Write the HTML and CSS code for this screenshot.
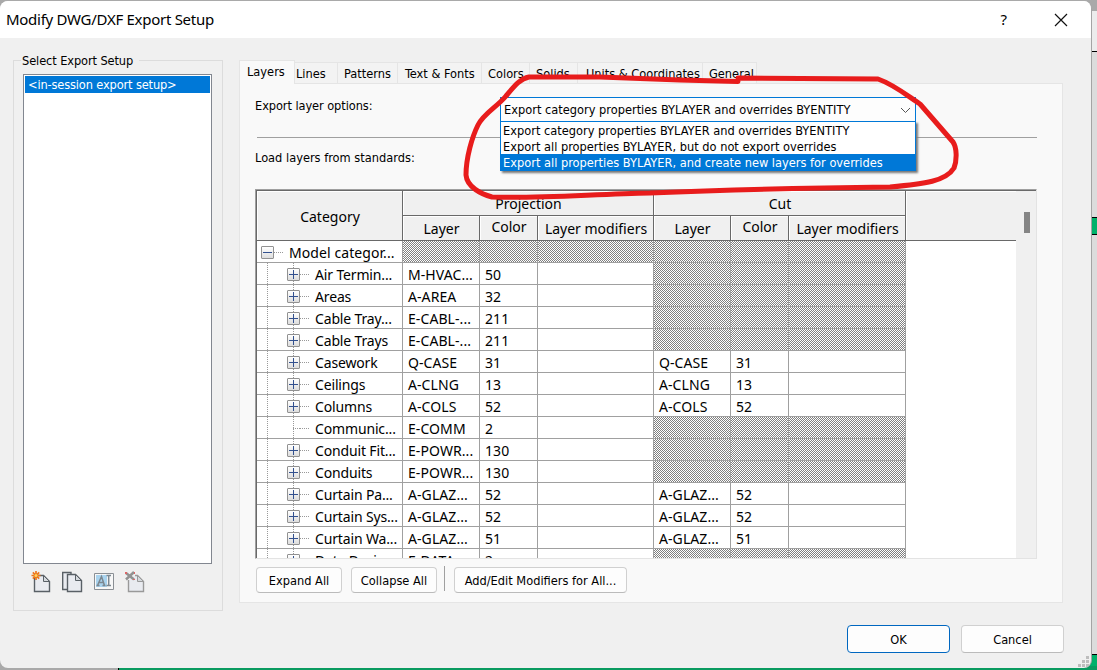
FILE: index.html
```
<!DOCTYPE html>
<html lang="en">
<head>
<meta charset="utf-8">
<title>Modify DWG/DXF Export Setup</title>
<link rel="stylesheet" href="styles.css">
</head>
<body>
<div class="backdrop">
  <span class="edge-top"></span><span class="edge-green"></span><span class="edge-corner"></span><span class="edge-bottom"></span>
</div>
<main class="dialog">
  <header class="titlebar">
    <h1>Modify DWG/DXF Export Setup</h1>
    <span class="help">?</span>
    <svg class="close" width="14" height="14" viewBox="0 0 14 14"><path d="M1 1L13 13M13 1L1 13"/></svg>
  </header>
  <div class="content">
    <section class="group">
      <h2>Select Export Setup</h2>
      <div class="list"><div class="item">&lt;in-session export setup&gt;</div></div>
      <div class="tools">
        <svg width="20" height="22" viewBox="0 0 20 22"><path class="page" d="M3.500 4.500H12.500L18.500 10.500V20.500H3.500Z"/><path class="fold" d="M12.500 4.500V10.500H18.500Z"/><path class="burst" d="M5 0V9M.5 4.500H9.500M1.800 1.300L8.200 7.700M8.200 1.300L1.800 7.700"/><circle cx="5" cy="4.500" r="1.500" fill="#ffd35a"/></svg>
        <svg width="21" height="22" viewBox="0 0 21 22"><path class="page" d="M.7 1.500H9V18.500H.7Z"/><path class="page" d="M5.500 3.500H13.500L19.500 9.500V20.500H5.500Z"/><path class="fold" d="M13.500 3.500V9.500H19.500Z"/></svg>
        <svg width="20" height="22" viewBox="0 0 20 22"><path fill="#f7f7f7" stroke="#8a8f94" d="M.5 2.500H19.500V18.500H.5Z"/><path fill="#a9d3ee" d="M2 4H13V16H2Z"/><path fill="none" stroke="#7b8790" stroke-width="1.500" d="M3.500 14.500L7.500 5.500L10.500 14.500M5 11.500H9.500M2.500 14.500H5.500M8.500 14.500H11.500M12.500 4.500H17M12.500 14.500H17M14.700 4.500V14.500"/></svg>
        <svg width="20" height="22" viewBox="0 0 20 22"><path class="page off" d="M3.500 9V20.500H18.500V10.500L12.500 4.500H10"/><path class="fold off" d="M12.500 4.500V10.500H18.500Z"/><path fill="none" stroke="#929292" stroke-width="2.500" d="M1 2L9 8.500M9 1L1 8.500"/><path fill="#d66" d="M0 1h2v2H0zM9 1h1v2H9zM8 8h2v1H8z"/></svg>
      </div>
    </section>
    <section class="right">
      <nav class="tabs">
        <span class="tab on t1">Layers</span><span class="tab t2">Lines</span><span class="tab t3">Patterns</span><span class="tab t4">Text &amp; Fonts</span><span class="tab t5">Colors</span><span class="tab t6">Solids</span><span class="tab t7">Units &amp; Coordinates</span><span class="tab t8">General</span>
      </nav>
      <div class="panel">
        <div class="option">
          <label>Export layer options:</label>
          <div class="combo"><span>Export category properties BYLAYER and overrides BYENTITY</span>
            <svg width="11" height="7" viewBox="0 0 11 7"><path d="M1 1L5.500 5.500L10 1"/></svg>
            <ul class="menu"><li>Export category properties BYLAYER and overrides BYENTITY</li><li>Export all properties BYLAYER, but do not export overrides</li><li class="sel">Export all properties BYLAYER, and create new layers for overrides</li></ul>
          </div>
        </div>
        <hr>
        <div class="standards">Load layers from standards:</div>
        <div class="grid">
          <div class="table" id="table">
            <div class="head cat">Category</div>
            <div class="head wide">Projection</div>
            <div class="head wide">Cut</div>
            <div class="head">Layer</div><div class="head up">Color</div><div class="head">Layer modifiers</div>
            <div class="head">Layer</div><div class="head up">Color</div><div class="head">Layer modifiers</div>
          </div>
          <div class="filler"></div>
          <div class="scroll"><span></span></div>
        </div>
        <div class="actions"><button class="b1">Expand All</button><button class="b2">Collapse All</button><i></i><button class="b3">Add/Edit Modifiers for All...</button></div>
      </div>
    </section>
  </div>
  <footer><button class="ok">OK</button><button>Cancel</button></footer>
  <svg class="grip" width="11" height="11" viewBox="0 0 11 11"><path d="M8 0h3v3H8zM4 4h3v3H4zM8 4h3v3H8zM0 8h3v3H0zM4 8h3v3H4zM8 8h3v3H8z"/></svg>
</main>
<svg class="ink" width="1097" height="670" viewBox="0 0 1097 670"><path d="M738 81.500L680 80L600 77L529 77C519 79 513 88 506 96C497 107 484 113 478 125C472 137 466 158 466 175C467 187 481 194 492 197C535 199 595 194 650 193C720 190 800 188 890 187C925 184 946 181 954 168C957 160 957 148 953 142L920 104C909 97 895 85 878 79L738 78"/></svg>
<script src="table.js"></script>
</body>
</html>
```
FILE: table.js
```
const rows = [
  ["Model categor...", null, null, true, "-"],
  ["Air Termin...", "M-HVAC...", "50", true],
  ["Areas", "A-AREA", "32", true],
  ["Cable Tray...", "E-CABL-...", "211", true],
  ["Cable Trays", "E-CABL-...", "211", true],
  ["Casework", "Q-CASE", "31", false],
  ["Ceilings", "A-CLNG", "13", false],
  ["Columns", "A-COLS", "52", false],
  ["Communic...", "E-COMM", "2", true, ""],
  ["Conduit Fit...", "E-POWR...", "130", true],
  ["Conduits", "E-POWR...", "130", true],
  ["Curtain Pa...", "A-GLAZ...", "52", false],
  ["Curtain Sys...", "A-GLAZ...", "52", false],
  ["Curtain Wa...", "A-GLAZ...", "51", false],
  ["Data Devic...", "E-DATA...", "2", true]
];
const cell = (text, cls) => `<div class="cell ${cls || ""}"><span>${text || ""}</span></div>`;
document.getElementById("table").insertAdjacentHTML("beforeend", rows.map(([name, layer, color, off, mark = "+"]) => {
  const box = mark ? `<b class="box ${mark === "+" ? "plus" : ""}"></b>` : `<b class="nobox"></b>`;
  const first = `<div class="cell tree ${mark === "-" ? "root" : "leaf"}">${box}<i></i><span>${name}</span></div>`;
  const proj = layer ? cell(layer) + cell(color) + cell() : cell("", "off").repeat(3);
  const cut = off ? cell("", "off").repeat(3) : cell(layer) + cell(color) + cell();
  return first + proj + cut;
}).join(""));
```
FILE: styles.css
```
* { box-sizing: border-box; }
body { margin: 0; width: 1097px; height: 670px; overflow: hidden; position: relative; background: #a9a9a9; font: 12.7px/16px "DejaVu Sans Condensed", "DejaVu Sans", sans-serif; color: #000; }
h1, h2, ul { margin: 0; padding: 0; font: inherit; list-style: none; }
.backdrop span { position: absolute; }
.edge-top { left: 1091px; top: 11px; width: 6px; height: 659px; background: linear-gradient(#ececec 0 40px, #000 40px 41px, #dcdcdc 41px); }
.edge-green { left: 1091px; top: 217px; width: 6px; height: 18px; background: #00b16a; border: solid #000; border-width: 1px 0; }
.edge-corner { left: 1080px; top: 654px; width: 17px; height: 16px; background: #00b16a; border-top: 1px solid #000; }
.edge-bottom { left: 118px; top: 666px; width: 979px; height: 4px; background: #0a9b60; border-left: 1px solid #000; }
.dialog { position: absolute; left: 0; top: 1px; width: 1092px; height: 667px; background: #f0f0f0; border-radius: 8px; border-right: 1px solid #a4a4a4; overflow: hidden; display: flex; flex-direction: column; }
.titlebar { height: 37px; background: #fff; display: flex; align-items: center; padding: 0 23px 0 6px; font: 15px/20px "Noto Sans", sans-serif; flex: none; }
h1 { flex: 1; margin-top: -2px; letter-spacing: -.28px; white-space: nowrap; }
.help { margin-right: 47px; margin-top: -2px; }
.close { fill: none; stroke: #111; stroke-width: 1.2; }
.content { display: flex; padding-left: 13px; height: 565px; flex: none; }
.group { width: 210px; height: 551px; margin-top: 22px; border: 1px solid #dcdcdc; padding: 0 9px; }
h2 { width: 118px; margin: -8px 0 5px -2px; padding-left: 1px; background: #f0f0f0; white-space: nowrap; letter-spacing: -.1px; }
.list { width: 189px; height: 490px; background: #fff; border: 1px solid #828790; padding: 1px; }
.item { height: 17px; background: #0078d7; color: #fff; padding-left: 3px; line-height: 17px; white-space: nowrap; letter-spacing: -.14px; }
.tools { display: flex; gap: 11px; padding: 7px 0 0 8px; }
.page { fill: #e9ebf0; stroke: #596066; stroke-width: 1.4; }
.fold { fill: #d5d9dd; stroke: #596066; }
.off { stroke: #999; }
.cell.off { background: repeating-conic-gradient(#808080 0 25%, #fff 0 50%) 0 0 / 2px 2px; }
.burst { fill: none; stroke: #ed771d; stroke-width: 1.7; }
.right { width: 824px; margin-left: 16px; padding-top: 22px; }
.tabs { display: flex; align-items: flex-end; height: 23px; }
.tab { height: 21px; border: 1px solid #e5e5e5; border-width: 1px 1px 0 0; background: #f3f3f3; padding-top: 3px; white-space: nowrap; }
.tab.on { height: 24px; margin-bottom: -1px; background: #f9f9f9; border-left-width: 1px; position: relative; z-index: 1; }
.t1 { width: 56px; padding-left: 7px; } .t2 { width: 43px; padding-left: 1px; } .t3 { width: 60px; padding-left: 6px; } .t4 { width: 84px; padding-left: 7px; } .t5 { width: 48px; padding-left: 6px; } .t6 { width: 48px; padding-left: 6px; } .t7 { width: 125px; padding-left: 8px; } .t8 { width: 54px; padding-left: 6px; }
.panel { width: 824px; height: 520px; border: 1px solid #e5e5e5; background: #f9f9f9; padding: 13px 15px 0; }
.option { display: flex; height: 40px; padding-top: 1px; }
label { width: 245px; letter-spacing: -.08px; }
.combo { position: relative; width: 416px; height: 25px; margin-top: -1px; border: 1px solid #0078d7; background: #fdfdfd; padding: 4px 3px; display: flex; justify-content: space-between; white-space: nowrap; }
.combo svg { margin: 5px 1px 0 0; fill: none; stroke: #555; }
.menu { position: absolute; left: -1px; top: 23px; width: 416px; background: #fff; border: 1px solid #0078d7; box-shadow: 2px 2px 2px #777; z-index: 2; }
.menu li { height: 16px; padding-left: 2px; line-height: 18px; } .menu .sel { background: #0078d7; color: #fff; }
hr { width: 780px; height: 1px; margin: 0 0 12px 2px; border: 0; background: #a0a0a0; }
.standards { height: 39px; }
.grid { width: 782px; height: 370px; border: 1px solid; border-color: #a0a0a0 #e3e3e3 #e3e3e3 #a0a0a0; display: flex; overflow: hidden; background: #fff; font: 14px/22px "Noto Sans", sans-serif; box-shadow: inset 1px 1px #696969; padding: 1px 0 0 1px; }
.table { display: grid; grid-template-columns: 146px 77px 58px 116px 77px 58px 117px; grid-template-rows: 25px 25px; grid-auto-rows: 22px; flex: none; }
.head { background: #f0f0f0; border: solid #696969; border-width: 0 1px 1px 0; box-shadow: inset 1px 1px #fff; text-align: center; padding: 2px 0 0 1px; white-space: nowrap; }
.cat { grid-row: span 2; padding-top: 15px; } .wide { grid-column: span 3; } .up { padding-top: 0; }
.cell { border: solid #a0a0a0; border-width: 0 1px 1px 0; padding: 1px 0 0 5px; white-space: nowrap; overflow: hidden; letter-spacing: .08px; }
.tree { display: flex; align-items: center; padding-top: 2px; }
.tree i { width: 9px; border-top: 1px dotted #999; margin-right: 6px; flex: none; }
.root { padding-left: 4px; }
.leaf { padding-left: 30px; background: repeating-linear-gradient(#999 0 1px, #fff 1px 2px) 10px 0 / 1px 100% no-repeat, repeating-linear-gradient(#999 0 1px, #fff 1px 2px) 36px 0 / 1px 100% no-repeat; }
.leaf span { letter-spacing: -.15px; }
.box { width: 13px; height: 13px; flex: none; border: 1px solid #919191; border-radius: 1px; background: linear-gradient(#33518f, #33518f) center / 9px 1px no-repeat, linear-gradient(#fff, #ddd); }
.plus { background: linear-gradient(#33518f, #33518f) center / 9px 1px no-repeat, linear-gradient(#33518f, #33518f) center / 1px 9px no-repeat, linear-gradient(#fff, #ddd); }
.nobox { width: 13px; flex: none; background: repeating-linear-gradient(90deg, #999 0 1px, #fff 1px 2px) 6px 0 / 7px 1px no-repeat; height: 1px; }
.filler { flex: 1; height: 50px; background: #f0f0f0; border-bottom: 1px solid #696969; box-shadow: inset 1px 1px #fff; }
.scroll { width: 20px; background: #f0f0f0; padding: 21px 0 0 8px; } .scroll span { display: block; width: 6px; height: 21px; background: #858585; }
.actions { display: flex; align-items: center; padding-top: 8px; }
button { font: inherit; color: #000; background: #fdfdfd; border: 1px solid #d0d0d0; border-bottom-color: #bbb; border-radius: 4px; height: 26px; padding: 2px 0 0; white-space: nowrap; }
.b1 { width: 86px; margin: 0 9px 0 1px; } .b2 { width: 86px; } .b3 { width: 173px; } .actions i { width: 1px; height: 25px; background: #a0a0a0; margin: -3px 9px 0 7px; }
footer { display: flex; justify-content: flex-end; gap: 11px; padding: 22px 27px 0 0; } footer button { width: 103px; height: 28px; } footer .ok { border-color: #0067c0; }
.grip { position: absolute; right: 2px; bottom: 1px; fill: #bdbdbd; }
.ink { position: absolute; left: 0; top: 0; fill: none; stroke: #e81c1c; stroke-width: 5; stroke-linecap: round; stroke-linejoin: round; z-index: 9; }
```
